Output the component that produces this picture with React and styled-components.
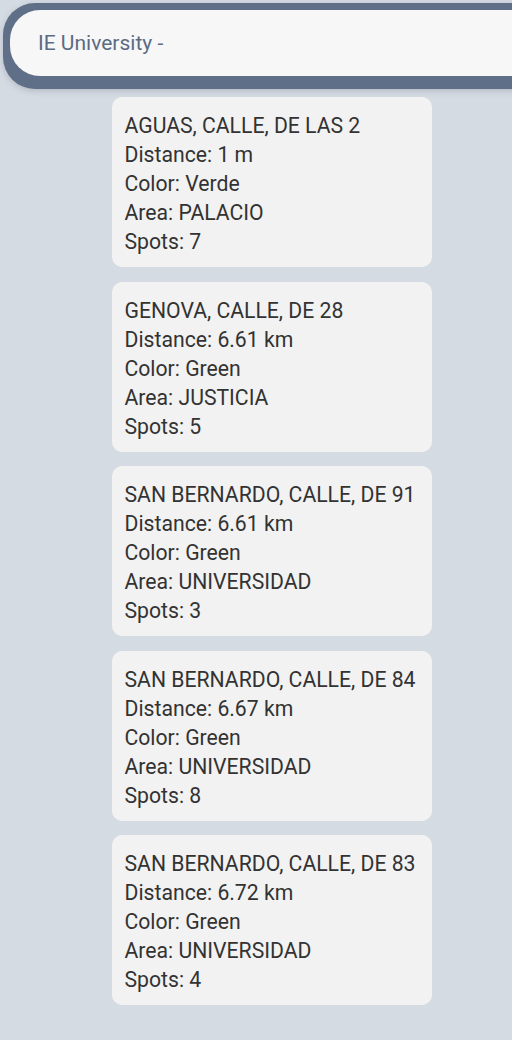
import styled, { createGlobalStyle } from "styled-components";

const GlobalStyle = createGlobalStyle`
  html, body {
    margin: 0;
    padding: 0;
    background: #d5dbe3;
    font-family: Roboto, "Noto Sans", sans-serif;
    overflow-x: hidden;
  }
`;

const Page = styled.div`
  min-height: 1040px;
  overflow: hidden;
`;

const SearchWrap = styled.div`
  margin: 3px -40px 0 3px;
  padding: 7px 0 13px 7px;
  background: #5f6f87;
  border-radius: 32px;
  box-shadow: 0 2px 6px rgba(40, 50, 70, 0.2);
`;

const SearchInput = styled.div`
  height: 66px;
  box-sizing: border-box;
  background: #f7f7f7;
  border-radius: 30px;
  padding-left: 28px;
  display: flex;
  align-items: center;
  font-size: 21px;
  color: #5b6b82;
`;

const List = styled.div`
  display: flex;
  flex-direction: column;
  align-items: center;
  gap: 14.5px;
  padding: 8px 0 0 31px;
`;

const Card = styled.div`
  width: 320px;
  box-sizing: border-box;
  background: #f2f2f2;
  border-radius: 10px;
  padding: 14px 13px 11px;
`;

const Line = styled.div`
  font-size: 21.2px;
  line-height: 29px;
  color: #333333;
  white-space: nowrap;
`;

const spots = [
  { address: "AGUAS, CALLE, DE LAS 2", distance: "1 m", color: "Verde", area: "PALACIO", spots: 7 },
  { address: "GENOVA, CALLE, DE 28", distance: "6.61 km", color: "Green", area: "JUSTICIA", spots: 5 },
  { address: "SAN BERNARDO, CALLE, DE 91", distance: "6.61 km", color: "Green", area: "UNIVERSIDAD", spots: 3 },
  { address: "SAN BERNARDO, CALLE, DE 84", distance: "6.67 km", color: "Green", area: "UNIVERSIDAD", spots: 8 },
  { address: "SAN BERNARDO, CALLE, DE 83", distance: "6.72 km", color: "Green", area: "UNIVERSIDAD", spots: 4 },
];

export default function App() {
  return (
    <Page>
      <GlobalStyle />
      <SearchWrap>
        <SearchInput>IE University -</SearchInput>
      </SearchWrap>
      <List>
        {spots.map((s) => (
          <Card key={s.address}>
            <Line>{s.address}</Line>
            <Line>Distance: {s.distance}</Line>
            <Line>Color: {s.color}</Line>
            <Line>Area: {s.area}</Line>
            <Line>Spots: {s.spots}</Line>
          </Card>
        ))}
      </List>
    </Page>
  );
}
